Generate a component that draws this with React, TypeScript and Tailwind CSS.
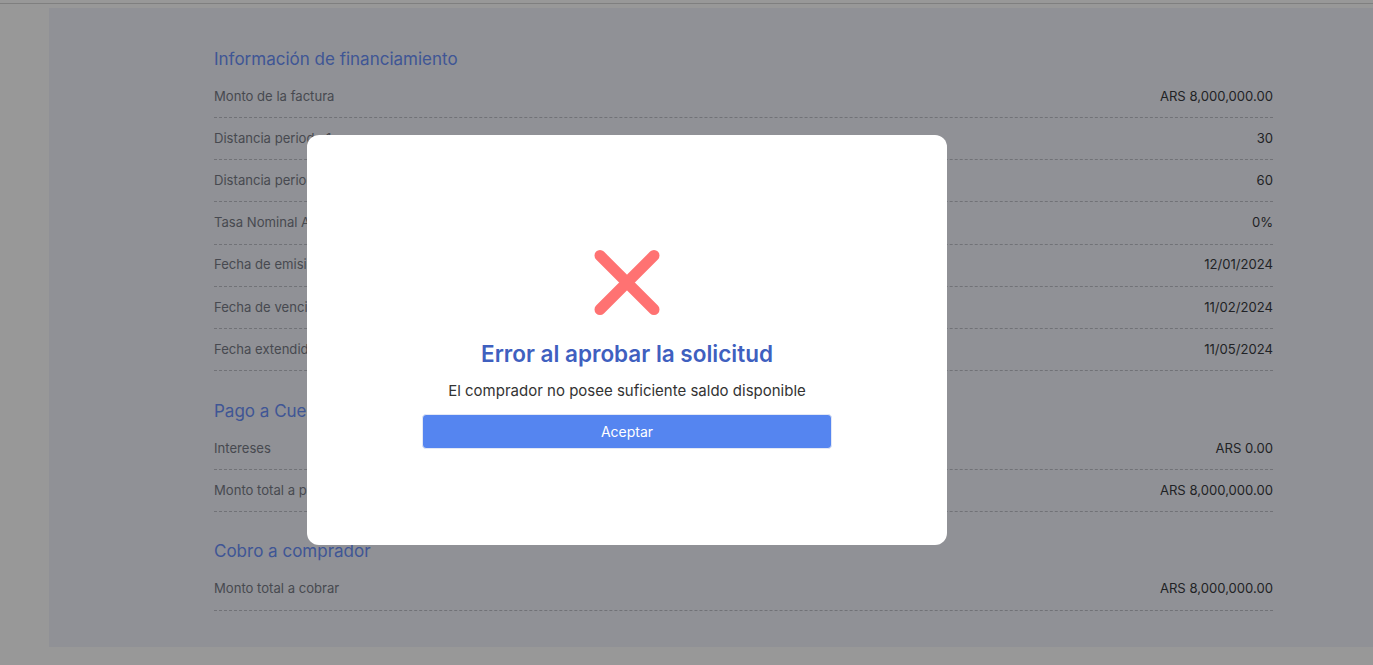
const sections = [
  {
    title: 'Información de financiamiento',
    rows: [
      ['Monto de la factura', 'ARS 8,000,000.00'],
      ['Distancia periodo 1', '30'],
      ['Distancia periodo 2', '60'],
      ['Tasa Nominal Anual', '0%'],
      ['Fecha de emisión', '12/01/2024'],
      ['Fecha de vencimiento', '11/02/2024'],
      ['Fecha extendida', '11/05/2024'],
    ],
  },
  {
    title: 'Pago a Cuenta',
    rows: [
      ['Intereses', 'ARS 0.00'],
      ['Monto total a pagar', 'ARS 8,000,000.00'],
    ],
  },
  {
    title: 'Cobro a comprador',
    rows: [['Monto total a cobrar', 'ARS 8,000,000.00']],
  },
]

function Section({ title, rows, index }: { title: string; rows: string[][]; index: number }) {
  const gap = index === 0 ? 'mb-0' : index === 1 ? 'mt-[28px]' : 'mt-[27px]'
  return (
    <section className={gap}>
      <h2 className="h-[24px] leading-[24px] text-[17px] text-[#6a8ff8] mb-[5px]">{title}</h2>
      {rows.map(([label, value]) => (
        <div
          key={label}
          className="h-[42.17px] flex items-center justify-between border-b border-dashed border-[#bcbfc7] text-[13.1px]"
        >
          <span className="text-[#777b86]">{label}</span>
          <span className="text-[#383a40]">{value}</span>
        </div>
      ))}
    </section>
  )
}

export default function App() {
  return (
    <div className="relative h-[665px] overflow-hidden bg-[#fdfdfd] font-['Inter','Noto_Sans',sans-serif]">
      <div className="h-[4px] border-t border-[#d4d4d4] mt-[3px]" />
      <div className="ml-[49px] mt-[1px] h-[639px] bg-[#f0f2fa] pl-[165px] pt-[39px]">
        <div className="w-[1059px]">
          {sections.map((s, i) => (
            <Section key={s.title} title={s.title} rows={s.rows} index={i} />
          ))}
        </div>
      </div>

      {/* overlay + modal */}
      <div className="absolute inset-0 bg-black/40">
        <div className="absolute left-[307px] top-[135px] w-[640px] h-[410px] rounded-[12px] bg-white flex flex-col items-center pt-[114px]">
          <svg width="66" height="67" viewBox="0 0 66 67" fill="none">
            <path d="M6 6.5 L60 60.5 M60 6.5 L6 60.5" stroke="#ff7272" strokeWidth="11" strokeLinecap="round" />
          </svg>
          <h1 className="mt-[24px] text-[22.5px] leading-[28px] font-semibold text-[#3f60bf]">
            Error al aprobar la solicitud
          </h1>
          <p className="mt-[13px] text-[15px] leading-[20px] text-[#333333]">
            El comprador no posee suficiente saldo disponible
          </p>
          <button className="mt-[13px] w-[410px] h-[35px] rounded-[4px] bg-[#5585f0] border border-[#e3e8f5] text-white text-[14px]">
            Aceptar
          </button>
        </div>
      </div>
    </div>
  )
}
